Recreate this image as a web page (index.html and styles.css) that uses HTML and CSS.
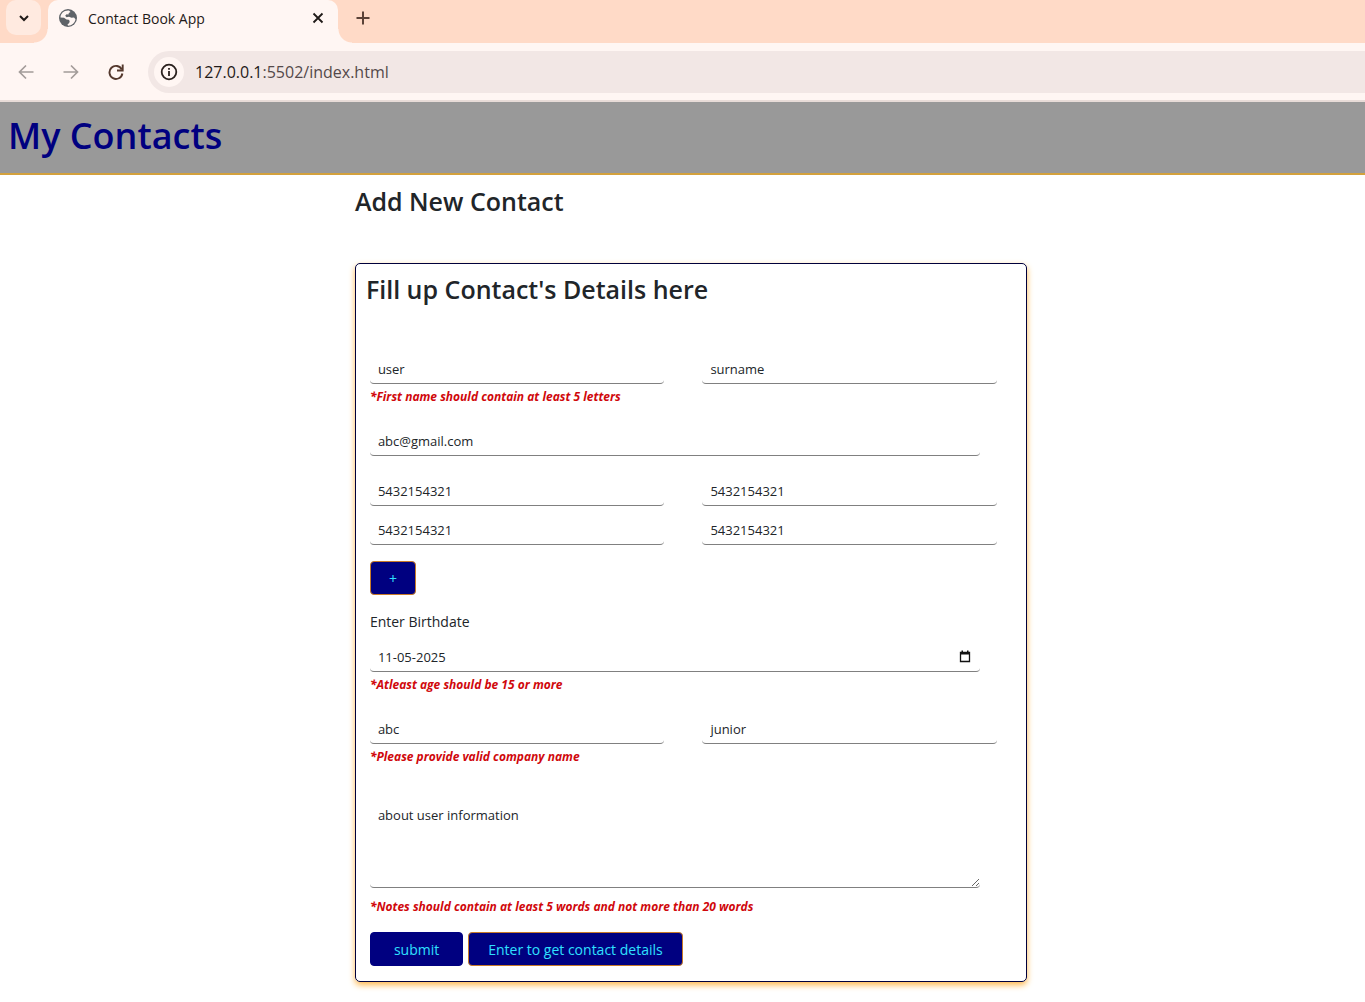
FILE: index.html
```html
<!DOCTYPE html>
<html lang="en">
<head>
    <meta charset="UTF-8">
    <title>Contact Book App</title>
    <link rel="stylesheet" href="styles.css">
</head>
<body>
    <div class="browser">
        <div class="tab-strip">
            <button class="tab-search" aria-label="Search tabs">
                <svg width="12" height="12" viewBox="0 0 12 12"><path d="M2 4l4 4 4-4" fill="none" stroke="#1f1a18" stroke-width="2"/></svg>
            </button>
            <div class="tab">
                <svg width="20" height="20" viewBox="0 0 20 20">
                    <circle cx="10" cy="10" r="9" fill="#5f6368"/>
                    <path d="M11 2.500C6 2 2.500 5.500 2.500 9.500l3.500.3 2.500 1.700 2.200.2 1 1.300-.5 2-1.700 1.500.5 1.200c4-.2 7-3 7.500-6.500l-1.500-1.700-2.500.3-2.500-1-2.500.5-1.300-1.500 1.300-1.500 2 .2.3-1.500 1.700-1z" fill="#fff6f3"/>
                </svg>
                <span class="tab-title">Contact Book App</span>
                <button class="tab-close" aria-label="Close tab">
                    <svg width="12" height="12" viewBox="0 0 12 12"><path d="M1.500 1.500l9 9M10.500 1.500l-9 9" fill="none" stroke="#1f1a18" stroke-width="1.800"/></svg>
                </button>
            </div>
            <button class="tab-new" aria-label="New tab">
                <svg width="14" height="14" viewBox="0 0 14 14"><path d="M7 .5v13M.5 7h13" fill="none" stroke="#5b4238" stroke-width="2"/></svg>
            </button>
        </div>
        <div class="toolbar">
            <button aria-label="Back">
                <svg width="16" height="16" viewBox="0 0 16 16"><path d="M15.500 8H1.500M8 1.500L1.500 8 8 14.500" fill="none" stroke="#a39c99" stroke-width="1.700"/></svg>
            </button>
            <button aria-label="Forward">
                <svg width="16" height="16" viewBox="0 0 16 16"><path d="M.5 8h14M8 1.500L14.500 8 8 14.500" fill="none" stroke="#a39c99" stroke-width="1.700"/></svg>
            </button>
            <button aria-label="Reload">
                <svg width="16" height="16" viewBox="0 0 16 16"><path d="M13.800 5.500A6.500 6.500 0 1 0 14.400 9.500" fill="none" stroke="#54382d" stroke-width="1.900"/><path d="M14.700.5v6H9" fill="none" stroke="#54382d" stroke-width="1.900"/></svg>
            </button>
            <div class="address">
                <span class="site-info">
                    <svg width="18" height="18" viewBox="0 0 18 18"><circle cx="9" cy="9" r="7.300" fill="none" stroke="#2a211e" stroke-width="1.800"/><path d="M9 8v5M9 5v1.800" stroke="#2a211e" stroke-width="1.800"/></svg>
                </span>
                <span>127.0.0.1<span class="path">:5502/index.html</span></span>
            </div>
        </div>
    </div>

    <header>
        <h1>My Contacts</h1>
    </header>

    <main>
        <h2>Add New Contact</h2>
        <form class="card">
            <h2>Fill up Contact's Details here</h2>
            <div class="row names">
                <div class="field">
                    <input type="text" aria-label="First name" value="user">
                    <p class="error">*First name should contain at least 5 letters</p>
                </div>
                <input type="text" aria-label="Last name" value="surname">
            </div>
            <input class="wide" type="email" aria-label="Email" value="abc@gmail.com">
            <div class="row phones">
                <input type="tel" aria-label="Phone 1" value="5432154321">
                <input type="tel" aria-label="Phone 2" value="5432154321">
                <input type="tel" aria-label="Phone 3" value="5432154321">
                <input type="tel" aria-label="Phone 4" value="5432154321">
            </div>
            <button type="button" class="btn btn-add">+</button>
            <label for="birthdate">Enter Birthdate</label>
            <div class="date wide">
                <input type="text" id="birthdate" value="11-05-2025">
                <button type="button" class="calendar" aria-label="Open calendar">
                    <svg width="12" height="13" viewBox="0 0 12 13"><path d="M1.500 2.500h9v9h-9z" fill="none" stroke="#111" stroke-width="1.300"/><path d="M1 2h10v2.500H1zM2.500.5H4V2H2.500zM8 .5h1.500V2H8z" fill="#111"/></svg>
                </button>
            </div>
            <p class="error">*Atleast age should be 15 or more</p>
            <div class="row company">
                <div class="field">
                    <input type="text" aria-label="Company" value="abc">
                    <p class="error">*Please provide valid company name</p>
                </div>
                <input type="text" aria-label="Job title" value="junior">
            </div>
            <textarea class="wide" aria-label="Notes">about user information</textarea>
            <p class="error">*Notes should contain at least 5 words and not more than 20 words</p>
            <div class="actions">
                <button type="button" class="btn btn-submit">submit</button>
                <button type="button" class="btn">Enter to get contact details</button>
            </div>
        </form>
    </main>
</body>
</html>
```
FILE: styles.css
```css
* {
    box-sizing: border-box;
}
body {
    margin: 0;
    background: #fff;
    color: #212529;
    font-family: "Segoe UI", "Open Sans", "Noto Sans", sans-serif;
    font-size: 14px;
}
h1, h2, p {
    margin: 0;
}
button, input, textarea {
    font-family: inherit;
}
svg {
    display: block;
}

/* browser bar */
.browser {
    background: #fff6f3;
    border-bottom: 2px solid #e8dcd8;
}
.browser button {
    display: flex;
    align-items: center;
    justify-content: center;
    padding: 0;
    border: 0;
    background: none;
}
.tab-strip {
    display: flex;
    height: 43px;
    background: #ffdac7;
}
.browser .tab-search {
    width: 35px;
    height: 35px;
    margin-left: 6px;
    border-radius: 10px;
    background: #ffeae0;
}
.tab {
    position: relative;
    display: flex;
    align-items: center;
    width: 290px;
    margin-left: 7px;
    padding: 0 14px 7px 10px;
    border-radius: 10px 10px 0 0;
    background: #fff6f3;
}
.tab::before, .tab::after {
    content: "";
    position: absolute;
    bottom: 0;
    width: 14px;
    height: 14px;
}
.tab::before {
    right: 100%;
    background: radial-gradient(circle at 0 0, transparent 13px, #fff6f3 14px);
}
.tab::after {
    left: 100%;
    background: radial-gradient(circle at 100% 0, transparent 13px, #fff6f3 14px);
}
.tab-title {
    flex: 1;
    margin-left: 10px;
    color: #1f1a18;
}
.browser .tab-new {
    height: 36px;
    margin-left: 18px;
}
.toolbar {
    display: flex;
    align-items: center;
    gap: 29px;
    height: 57px;
    padding-left: 18px;
}
.address {
    display: flex;
    flex: 1;
    align-items: center;
    gap: 11px;
    height: 42px;
    margin-left: -5px;
    padding-left: 6px;
    border-radius: 21px 0 0 21px;
    background: #f2e7e5;
    color: #1f1a18;
    font-size: 16px;
}
.site-info {
    padding: 6px;
    border-radius: 50%;
    background: #fff6f3;
}
.path {
    color: #54494a;
}

/* page */
header {
    padding: 10px 8px 14px;
    border-bottom: 2px solid #d3a13d;
    background: #999;
}
h1 {
    color: navy;
    font-size: 36px;
    font-weight: 600;
    line-height: 47px;
}
h2 {
    font-size: 25px;
    font-weight: 600;
    line-height: 30px;
}
main {
    max-width: 672px;
    margin: 11px 0 20px 26%;
}
.card {
    margin-top: 47px;
    padding: 10px 29px 16px 14px;
    border: 1px solid #00003c;
    border-radius: 5px;
    box-shadow: 0 3px 6px #ffb84d;
}
.card h2 {
    margin-left: -4px;
}
.row {
    display: grid;
    grid-template-columns: 1fr 1fr;
    align-items: start;
    column-gap: 38px;
}
input, textarea {
    display: block;
    width: 100%;
    height: 31px;
    padding: 6px 8px 4px;
    border: 0;
    border-bottom: 1px solid #808080;
    border-radius: 4px;
    background: #fff;
    color: #212529;
    font-size: 13px;
    line-height: 20px;
}
.wide {
    width: calc(100% - 17px);
}
.error {
    height: 41px;
    padding-top: 4px;
    color: #d0080c;
    font-size: 12px;
    font-style: italic;
    font-weight: 700;
    line-height: 18px;
}
.names {
    margin-top: 49px;
}
.phones {
    row-gap: 8px;
    margin-top: 19px;
}
.btn {
    height: 34px;
    padding: 0 18px;
    border: 1px solid #c87a28;
    border-radius: 4px;
    background: navy;
    color: #2fe0ff;
    font-size: 14px;
}
.btn-add {
    display: block;
    margin-top: 16px;
}
label {
    display: block;
    margin: 16px 0 9px;
    line-height: 21px;
}
.date {
    position: relative;
}
.calendar {
    position: absolute;
    top: 9px;
    right: 9px;
    padding: 0;
    border: 0;
    background: none;
}
textarea {
    height: 88px;
    margin-top: 15px;
    padding-top: 5px;
}
textarea + .error {
    height: 44px;
    padding-top: 10px;
}
.actions {
    display: flex;
    gap: 5px;
    margin-bottom: -1px;
}
.actions .btn {
    padding: 0 19px;
}
.actions .btn-submit {
    padding: 0 23px;
    border-color: navy;
}
```
